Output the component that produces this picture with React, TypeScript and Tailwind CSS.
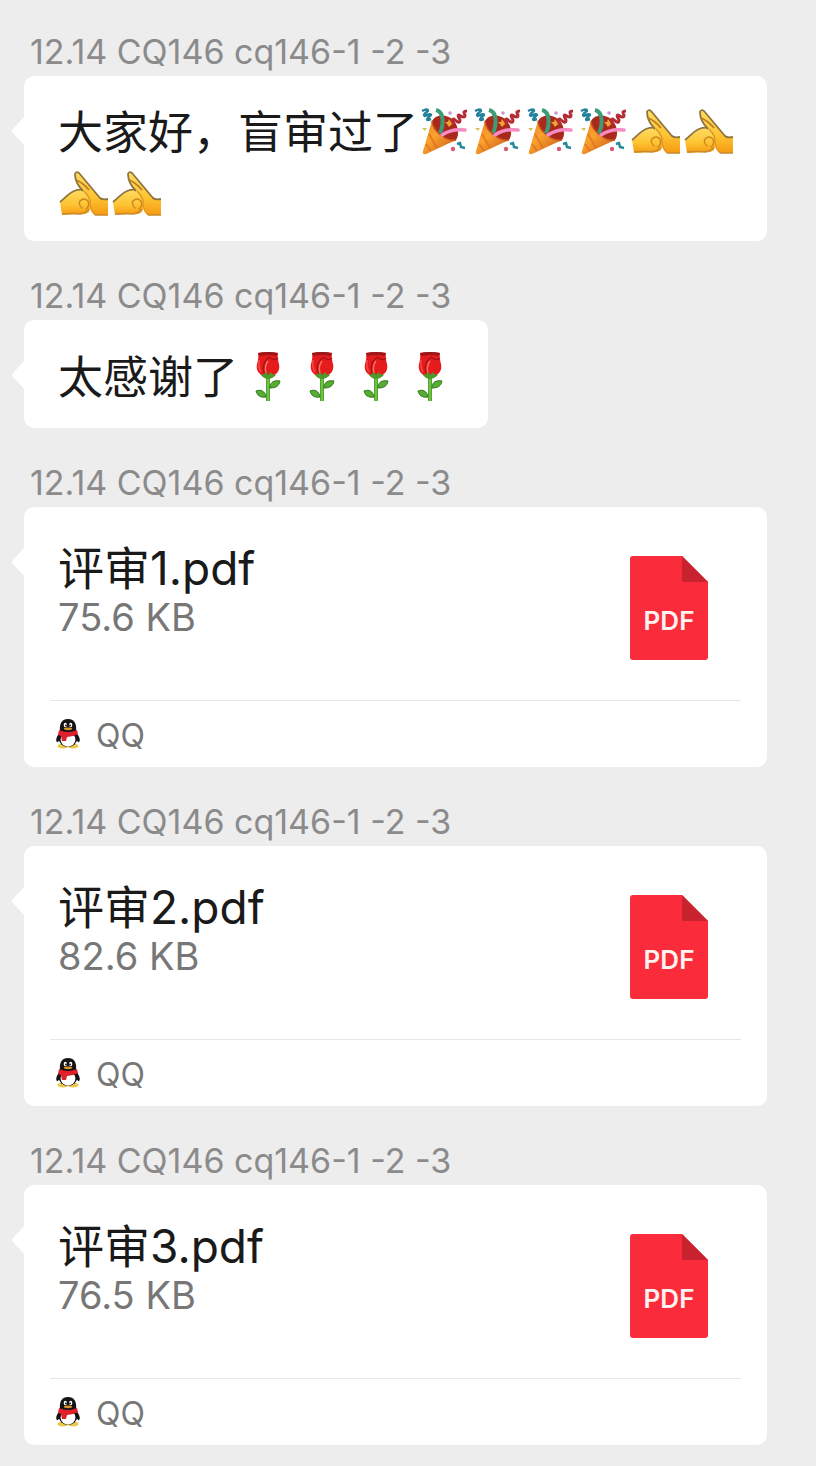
import type { ReactNode } from "react"

const sender = "12.14 CQ146 cq146-1 -2 -3"

const files = [
  { name: "评审1.pdf", size: "75.6 KB" },
  { name: "评审2.pdf", size: "82.6 KB" },
  { name: "评审3.pdf", size: "76.5 KB" },
]

function Party() {
  return (
    <svg viewBox="0 0 48 48" role="img" aria-label="庆祝" className="inline-block w-12 h-12 ml-[2px] mr-[3px] mb-[10px] align-middle overflow-visible">
      <defs>
        <linearGradient id="cone" x1="0" y1="0" x2="1" y2="1">
          <stop offset="0" stopColor="#e8831d" />
          <stop offset="0.4" stopColor="#f9a22e" />
          <stop offset="1" stopColor="#c9521a" />
        </linearGradient>
      </defs>
      <path d="M12 13C16 6 26 6 32 11C38 16 40 26 36 32C30 37 10 26 12 13Z" fill="#a92a1c" />
      <path d="M12 13L3 43Q2 47 6 46L36 32C27 33 14 25 12 13Z" fill="url(#cone)" />
      <path d="M9 26L17 40M6 36L11 43" stroke="#d8691b" strokeWidth="2" fill="none" opacity="0.6" />
      <path d="M12 13C13 24 26 33 36 32" stroke="#c6531b" strokeWidth="1.5" fill="none" />
      <path d="M29 11L31 14L34 15L31 17L29 19L27 16L25 14L28 14Z" fill="#f2a331" />
      <path d="M20 25C24 16 24 4 16 2" stroke="#3f9b76" strokeWidth="4" fill="none" />
      <path d="M22 27C29 22 37 21 45 22" stroke="#f68bc5" strokeWidth="3.5" fill="none" strokeLinecap="round" />
      <path d="M34 17Q31 11 34 11Q40 17 40 12Q37 7 39 7Q45 11 45 7Q42 3 47 3" stroke="#b52c35" strokeWidth="3" fill="none" strokeLinejoin="round" />
      <path d="M2 3Q8 0 8 3Q2 7 5 8Q11 5 11 7Q5 12 8 12L11 11" stroke="#25829c" strokeWidth="2.4" fill="none" strokeLinejoin="round" />
      <path d="M37 36L40 35L41 39L45 40" stroke="#25889a" strokeWidth="2.5" fill="none" />
      <circle cx="30" cy="5" r="1.8" fill="#c795cf" />
      <path d="M2 20L7 20L5 23Z" fill="#d8c058" />
      <circle cx="33" cy="41" r="2.2" fill="#d45b75" />
    </svg>
  )
}

function Salute() {
  return (
    <svg viewBox="0 0 48 48" role="img" aria-label="抱拳" className="inline-block w-12 h-12 ml-[2px] mr-[3px] mb-[10px] align-middle overflow-visible">
      <defs>
        <linearGradient id="skin" x1="0" y1="0" x2="0" y2="1">
          <stop offset="0" stopColor="#ffdc62" />
          <stop offset="0.6" stopColor="#fdc331" />
          <stop offset="1" stopColor="#f69a12" />
        </linearGradient>
      </defs>
      <path d="M0 32C5 28 9 23 14 21Q20 19 27 21L33 30L29 42Q25 45 20 44L2 45Z" fill="url(#skin)" />
      <path d="M0 32C5 28 9 23 14 21Q19 19 24 20" stroke="#8f7440" strokeWidth="1.8" fill="none" />
      <path d="M15 4Q16 1 19 3L40 28Q42 30 48 29V45H35C31 42 29 38 30 32Q29 27 23 21C18 16 15 11 15 4Z" fill="url(#skin)" />
      <path d="M23 21C17 15 15 10 15 4Q16 1 19 3L40 28Q42 30 48 29" stroke="#8f7440" strokeWidth="1.8" fill="none" strokeLinejoin="round" />
      <path d="M16 10Q22 12 29 20" stroke="#b97a22" strokeWidth="1.8" fill="none" />
      <path d="M24 21Q31 28 30 34Q31 41 35 45" stroke="#dc9424" strokeWidth="1.3" fill="none" />
      <path d="M22 38Q18 34 20 31Q24 27 28 31Q30 36 26 39" stroke="#cf8422" strokeWidth="1.4" fill="none" strokeLinecap="round" />
      <path d="M2 44Q14 43 20 44Q26 43 29 39M35 45H48" stroke="#c98a2d" strokeWidth="1.5" fill="none" />
    </svg>
  )
}

function Rose() {
  return (
    <svg viewBox="0 0 48 48" role="img" aria-label="玫瑰" className="inline-block w-12 h-12 ml-[6px] mb-[10px] align-middle overflow-visible">
      <path d="M22 21H26V48H22Z" fill="#4fa52d" />
      <path d="M24 23V48" stroke="#8bd44f" strokeWidth="1.2" />
      <path d="M26 35C26 29 30 27 36 28C35 33 32 35 26 35Z" fill="#55ad32" stroke="#32751f" />
      <path d="M22 44C21 38 17 36 12 38C13 42 16 45 22 44Z" fill="#55ad32" stroke="#32751f" />
      <path d="M14 0Q24 -2 34 0Q33 4 35 11C37 19 30 24 24 24C18 24 11 19 13 11Q15 4 14 0Z" fill="#e51b1d" />
      <path d="M14 0Q24 -2 34 0L33 3Q24 1 15 3Z" fill="#99191b" />
      <path d="M26 4C19 8 18 14 21 22M26 5Q31 8 34 5" stroke="#a51317" strokeWidth="1.3" fill="none" />
      <path d="M24 8Q20 13 22 20" stroke="#ff705d" strokeWidth="1.5" fill="none" />
      <path d="M15 7Q14 14 17 19" stroke="#f8483d" strokeWidth="1.5" fill="none" />
      <path d="M17 22L20 21L22 19L24 22L27 19L28 21L32 22Q28 26 24 26Q20 26 17 22Z" fill="#4c9a2a" />
    </svg>
  )
}

function PdfIcon() {
  return (
    <svg viewBox="0 0 78 104" className="w-[78px] h-[104px] shrink-0 mt-[14px] mr-[25px]">
      <path d="M3 0H52L78 26V101Q78 104 75 104H3Q0 104 0 101V3Q0 0 3 0Z" fill="#fa2c3b" />
      <path d="M52 0L78 26H54Q52 26 52 24Z" fill="#c8232f" />
      <text x="39" y="74" textAnchor="middle" fill="#fff3ef" className="font-['Inter',sans-serif] text-[26px] font-semibold">PDF</text>
    </svg>
  )
}

function Penguin() {
  return (
    <svg viewBox="0 0 24 30" className="w-6 h-[30px]" aria-hidden="true">
      <ellipse cx="7" cy="27" rx="5.5" ry="2.4" fill="#ecc84a" />
      <ellipse cx="17" cy="27" rx="5.5" ry="2.4" fill="#ecc84a" />
      <path d="M4 13C1 17 -1 21 1 23Q2 24 4 20L20 20Q22 24 23 23C25 21 23 17 20 13Z" fill="#141414" />
      <ellipse cx="12" cy="19" rx="9.5" ry="9" fill="#141414" />
      <ellipse cx="12" cy="20.5" rx="7.4" ry="7.2" fill="#fff" />
      <path d="M4 13C3 4 6 0 12 0C18 0 21 4 20 13Q12 17 4 13Z" fill="#141414" />
      <ellipse cx="9.3" cy="6" rx="1.6" ry="2.2" fill="#fff" />
      <ellipse cx="14.7" cy="6" rx="1.6" ry="2.2" fill="#fff" />
      <circle cx="9.9" cy="6.4" r="0.9" fill="#111" />
      <circle cx="14.1" cy="6.4" r="0.9" fill="#111" />
      <ellipse cx="12" cy="9.8" rx="4.2" ry="1.4" fill="#d9972c" />
      <path d="M3 11Q12 15 21 11L22 15Q17 18 11 18L10 22H6L5 17L2 16Z" fill="#e0202b" />
    </svg>
  )
}

function Message({ children }: { children: ReactNode }) {
  return (
    <section className="flex flex-col items-start">
      <h2 className="ml-[6px] mb-1 text-[34px] leading-10 text-[#8b8b8b]">{sender}</h2>
      <div className="relative max-w-full has-[a]:w-full bg-white rounded-[10px]">
        <svg viewBox="0 0 13 30" className="absolute -left-3 top-10 w-[13px] h-[30px]">
          <path d="M13 0V30L1 17Q-1 15 1 13Z" fill="#fff" />
        </svg>
        {children}
      </div>
    </section>
  )
}

export default function App() {
  return (
    <main className="min-h-screen bg-[#ededed] pl-6 pr-[49px] pt-8 pb-[21px] flex flex-col gap-[35px] font-['Inter','Noto_Sans_CJK_SC',sans-serif]">
      <Message>
        <p className="pl-[34px] pr-7 pt-[27px] pb-[13px] text-[45px] leading-[60px] text-[#1a1a1a]">
          大家好，盲审过了<Party /><Party /><Party /><Party /><Salute /><Salute /><Salute /><Salute />
        </p>
      </Message>
      <Message>
        <p className="px-[34px] pt-7 pb-[17px] text-[45px] leading-[60px] text-[#1a1a1a]">
          太感谢了<Rose /><Rose /><Rose /><Rose />
        </p>
      </Message>
      {files.map((file) => (
        <Message key={file.name}>
          <a href="#" className="block">
            <div className="flex justify-between pt-[35px] px-[34px] pb-10">
              <div>
                <h3 className="text-[46px] leading-[52px] text-[#1a1a1a]">{file.name}</h3>
                <p className="text-[38px] leading-[46px] text-[#777777]">{file.size}</p>
              </div>
              <PdfIcon />
            </div>
            <div className="mx-[26px] px-[6px] h-[67px] border-t border-[#e6e6e6] flex items-center gap-4">
              <Penguin />
              <span className="pt-1 text-[32px] leading-10 text-[#777777]">QQ</span>
            </div>
          </a>
        </Message>
      ))}
    </main>
  )
}
